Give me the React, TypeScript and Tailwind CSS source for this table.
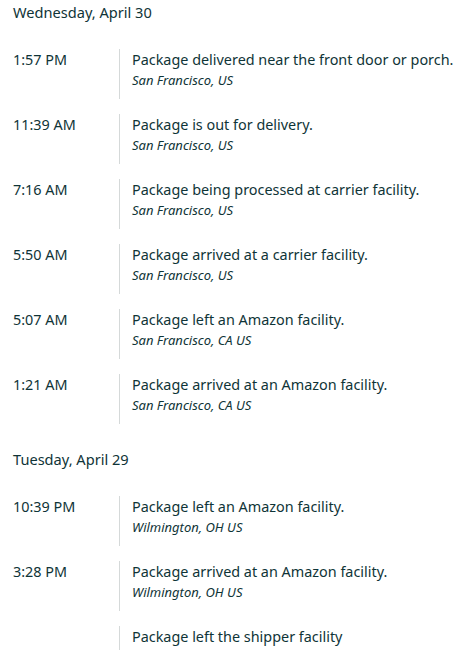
const days = [
  {
    label: 'Wednesday, April 30',
    events: [
      { time: '1:57 PM', text: 'Package delivered near the front door or porch.', place: 'San Francisco, US' },
      { time: '11:39 AM', text: 'Package is out for delivery.', place: 'San Francisco, US' },
      { time: '7:16 AM', text: 'Package being processed at carrier facility.', place: 'San Francisco, US' },
      { time: '5:50 AM', text: 'Package arrived at a carrier facility.', place: 'San Francisco, US' },
      { time: '5:07 AM', text: 'Package left an Amazon facility.', place: 'San Francisco, CA US' },
      { time: '1:21 AM', text: 'Package arrived at an Amazon facility.', place: 'San Francisco, CA US' },
    ],
  },
  {
    label: 'Tuesday, April 29',
    events: [
      { time: '10:39 PM', text: 'Package left an Amazon facility.', place: 'Wilmington, OH US' },
      { time: '3:28 PM', text: 'Package arrived at an Amazon facility.', place: 'Wilmington, OH US' },
      { time: '', text: 'Package left the shipper facility', place: '' },
    ],
  },
]

export default function App() {
  return (
    <div className="w-[464px] h-[650px] overflow-hidden bg-white pl-[13px] flex flex-col gap-[23px] text-[#0f3437] font-['Noto_Sans',sans-serif]">
      {days.map((day) => (
        <section key={day.label} className="flex flex-col">
          <h2 className="text-[14.6px] leading-6 font-normal mb-[25px]">{day.label}</h2>
          <div className="flex flex-col gap-[15px]">
            {day.events.map((ev, i) => (
              <div key={i} className="flex h-[50px] shrink-0">
                {/* time column */}
                <div className="w-[106px] shrink-0 text-[14.4px] leading-5 pt-[1px]">{ev.time}</div>
                <div className="border-l border-[#d5d9d9] pl-[12px] pt-[1px] whitespace-nowrap">
                  <div className="text-[14.4px] leading-5">{ev.text}</div>
                  {ev.place && <div className="text-[13px] leading-5 italic">{ev.place}</div>}
                </div>
              </div>
            ))}
          </div>
        </section>
      ))}
    </div>
  )
}
